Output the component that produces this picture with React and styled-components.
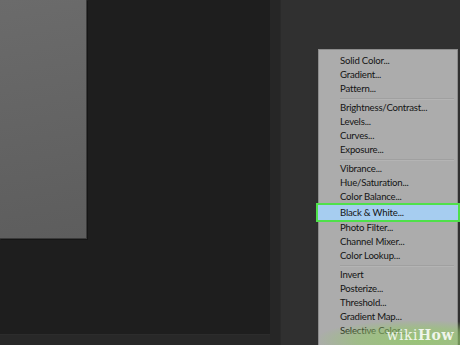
import { createGlobalStyle, styled } from "styled-components";

const Global = createGlobalStyle`
  html, body { margin: 0; padding: 0; background: #1e1e1e; }
  body { font-family: "Lato", "Open Sans", sans-serif; }
`;

const Screen = styled.div`
  width: 460px;
  height: 345px;
  display: flex;
  overflow: hidden;
  position: relative;
  background: #1e1e1e;
`;

const Workspace = styled.div`
  width: 270px;
  display: flex;
  flex-direction: column;
  justify-content: space-between;
`;

const Canvas = styled.div`
  width: 86px;
  height: 238px;
  background: linear-gradient(170deg, #6b6b6b 0%, #646464 50%, #5d5d5d 100%);
  border-right: 1px solid #3a3a3a;
  border-bottom: 1px solid #3a3a3a;
  box-shadow: 1px 1px 0 #151515;
`;

const StatusBar = styled.div`
  height: 10px;
  background: #282828;
  border-top: 1px solid #2c2c2c;
`;

const Divider = styled.div`
  width: 10px;
  background: #262626;
  border-right: 1px solid #2a2a2a;
`;

const Panel = styled.div`
  flex: 1;
  background: #303030;
  position: relative;
`;

const Menu = styled.div`
  position: absolute;
  left: 37px;
  top: 49px;
  width: 140px;
  height: 310px;
  background: #acacac;
  border: 1px solid #8c8c8c;
  padding-top: 4px;
  box-sizing: border-box;
`;

const Item = styled.div`
  height: 14px;
  line-height: 14px;
  font-size: 9.6px;
  letter-spacing: -0.2px;
  color: #141414;
  padding-left: 21px;
  white-space: nowrap;
  ${(p) =>
    p.$active &&
    `
    background: #a6cdf0;
    outline: 2px solid #4fe04a;
    margin: 1px -1px;
    padding-left: 22px;
    height: 15px;
    line-height: 15px;
  `}
`;

const Sep = styled.div`
  height: 1px;
  background: #a0a0a0;
  border-bottom: 1px solid #b4b4b4;
  margin: 2px 3px 1px 21px;
`;

const Watermark = styled.div`
  position: absolute;
  right: 0;
  bottom: 0;
  width: 140px;
  height: 24px;
  background: radial-gradient(ellipse at 70% 80%, rgba(150, 200, 110, 0.85) 0%, rgba(150, 200, 110, 0.55) 45%, rgba(150, 200, 110, 0) 75%);
  display: flex;
  align-items: flex-end;
  justify-content: flex-end;
  padding: 0 6px 2px 0;
  box-sizing: border-box;
  font-family: "DejaVu Serif", serif;
  font-size: 14px;
  font-weight: bold;
  color: rgba(255, 255, 255, 0.85);
  letter-spacing: 0.5px;
`;

const Light = styled.span`
  font-weight: normal;
`;

const groups = [
  ["Solid Color...", "Gradient...", "Pattern..."],
  ["Brightness/Contrast...", "Levels...", "Curves...", "Exposure..."],
  [
    "Vibrance...",
    "Hue/Saturation...",
    "Color Balance...",
    "Black & White...",
    "Photo Filter...",
    "Channel Mixer...",
    "Color Lookup...",
  ],
  ["Invert", "Posterize...", "Threshold...", "Gradient Map...", "Selective Color..."],
];

export default function App() {
  return (
    <>
      <Global />
      <Screen>
        <Workspace>
          <Canvas />
          <StatusBar />
        </Workspace>
        <Divider />
        <Panel>
          <Menu>
            {groups.map((g, gi) => (
              <div key={gi}>
                {gi > 0 && <Sep />}
                {g.map((label) => (
                  <Item key={label} $active={label === "Black & White..."}>
                    {label}
                  </Item>
                ))}
              </div>
            ))}
          </Menu>
        </Panel>
        <Watermark>
          <Light>wiki</Light>How
        </Watermark>
      </Screen>
    </>
  );
}
